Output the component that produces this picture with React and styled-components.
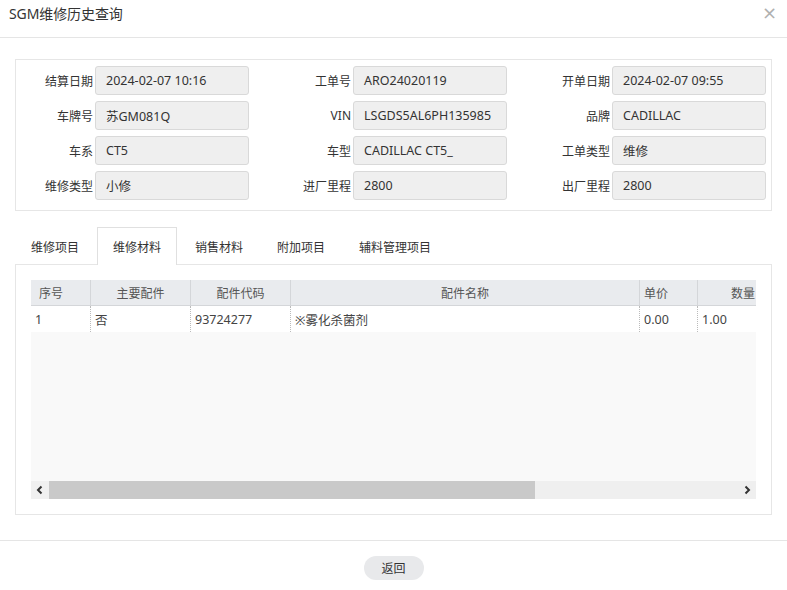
import React from 'react';
import styled, { createGlobalStyle } from 'styled-components';

const GlobalStyle = createGlobalStyle`
  html, body {
    margin: 0;
    padding: 0;
    background: #ffffff;
  }
  body {
    font-family: "Noto Sans", "Noto Sans CJK SC", sans-serif;
    color: #333;
  }
`;

const Dialog = styled.div`
  width: 787px;
  height: 590px;
  display: flex;
  flex-direction: column;
  background: #fff;
`;

const Header = styled.div`
  height: 38px;
  flex: none;
  box-sizing: border-box;
  border-bottom: 1px solid #e5e5e5;
  display: flex;
  align-items: center;
  justify-content: space-between;
  padding: 0 10px 11px 9px;
`;

const Title = styled.h1`
  margin: 0;
  font-size: 14px;
  font-weight: 400;
  color: #333;
  letter-spacing: -0.1px;
`;

const Close = styled.span`
  font-size: 18px;
  color: #b0b0b0;
  line-height: 1;
  font-family: "DejaVu Sans", sans-serif;
`;

const Body = styled.div`
  flex: none;
  height: 503px;
  padding: 21px 15px 0;
  box-sizing: border-box;
  border-bottom: 1px solid #e5e5e5;
`;

const InfoPanel = styled.div`
  border: 1px solid #e6e6e6;
  padding: 6px 5px 10px 0;
  display: grid;
  grid-template-columns: 77px 154px 100px 154px 101px 154px;
  column-gap: 2px;
  row-gap: 6px;
  align-items: center;
`;

const Label = styled.label`
  text-align: right;
  font-size: 12px;
  color: #333;
  white-space: nowrap;
`;

const Field = styled.div`
  height: 29px;
  box-sizing: border-box;
  border: 1px solid #d9d9d9;
  border-radius: 3px;
  background: #efefef;
  padding: 0 10px;
  display: flex;
  align-items: center;
  font-size: 12.5px;
  color: #333;
  white-space: nowrap;
  overflow: hidden;
`;

const TabBar = styled.div`
  margin-top: 15px;
  height: 38px;
  display: flex;
  align-items: stretch;
`;

const Tab = styled.div`
  padding: 0 15px;
  margin-right: 2px;
  display: flex;
  align-items: center;
  font-size: 12px;
  color: #333;
  box-sizing: border-box;
  border: 1px solid ${(p) => (p.active ? '#e0e0e0' : 'transparent')};
  border-bottom: none;
  background: ${(p) => (p.active ? '#fff' : 'transparent')};
  position: relative;
  top: 1px;
  z-index: 1;
`;

const TabPanel = styled.div`
  border: 1px solid #e6e6e6;
  height: 251px;
  box-sizing: border-box;
  padding: 15px 15px 0;
`;

const Grid = styled.div`
  width: 725px;
  height: 219px;
  display: flex;
  flex-direction: column;
  background: #f9f9f9;
  overflow: hidden;
`;

const Table = styled.div`
  flex: 1;
  overflow: hidden;
`;

const Row = styled.div`
  display: flex;
  height: ${(p) => (p.head ? 25 : 26)}px;
  width: 900px;
  background: ${(p) => (p.head ? '#e9ebee' : '#fff')};
  border-bottom: ${(p) => (p.head ? '1px solid #d4d6d9' : 'none')};
`;

const Cell = styled.div`
  width: ${(p) => p.w}px;
  flex-shrink: 0;
  box-sizing: border-box;
  padding: 0 ${(p) => (p.pad ?? 4)}px;
  display: flex;
  align-items: center;
  justify-content: ${(p) => p.align || 'flex-start'};
  font-size: ${(p) => (p.head ? 12 : 12.5)}px;
  color: ${(p) => (p.head ? '#555' : '#444')};
  border-right: 1px ${(p) => (p.head ? 'solid #d4d6d9' : 'dotted #bbb')};
  white-space: nowrap;
`;

const ScrollBar = styled.div`
  height: 18px;
  display: flex;
  background: #efefef;
`;

const ScrollBtn = styled.div`
  width: 18px;
  display: flex;
  align-items: center;
  justify-content: center;
  background: ${(p) => (p.left ? '#f0f0f0' : 'transparent')};
`;

const Thumb = styled.div`
  width: 486px;
  background: #c9c9c9;
`;

const Track = styled.div`
  flex: 1;
`;

const Footer = styled.div`
  flex: 1;
  display: flex;
  justify-content: center;
  padding-top: 15px;
`;

const Button = styled.button`
  width: 60px;
  height: 24px;
  border: none;
  border-radius: 12px;
  background: #e8e9eb;
  font-family: inherit;
  font-size: 12px;
  color: #333;
  cursor: pointer;
`;

const Arrow = ({ dir }) => (
  <svg width="8" height="10" viewBox="0 0 8 10">
    <path
      d={dir === 'left' ? 'M5.5 1.5 L2 5 L5.5 8.5' : 'M2.5 1.5 L6 5 L2.5 8.5'}
      fill="none"
      stroke="#333"
      strokeWidth="2"
    />
  </svg>
);

const info = [
  ['结算日期', '2024-02-07 10:16', '工单号', 'ARO24020119', '开单日期', '2024-02-07 09:55'],
  ['车牌号', '苏GM081Q', 'VIN', 'LSGDS5AL6PH135985', '品牌', 'CADILLAC'],
  ['车系', 'CT5', '车型', 'CADILLAC CT5_', '工单类型', '维修'],
  ['维修类型', '小修', '进厂里程', '2800', '出厂里程', '2800'],
];

const tabs = ['维修项目', '维修材料', '销售材料', '附加项目', '辅料管理项目'];

const columns = [
  { title: '序号', w: 60, align: 'flex-start', pad: 8 },
  { title: '主要配件', w: 100, align: 'center' },
  { title: '配件代码', w: 100, align: 'center' },
  { title: '配件名称', w: 349, align: 'center' },
  { title: '单价', w: 58, align: 'flex-start' },
  { title: '数量', w: 62, align: 'flex-end' },
  { title: '', w: 120 },
];

const rows = [['1', '否', '93724277', '※雾化杀菌剂', '0.00', '1.00', '']];

export default function App() {
  return (
    <>
      <GlobalStyle />
      <Dialog>
        <Header>
          <Title>SGM维修历史查询</Title>
          <Close>×</Close>
        </Header>
        <Body>
          <InfoPanel>
            {info.map((r) =>
              [0, 2, 4].map((i) => (
                <React.Fragment key={r[i]}>
                  <Label>{r[i]}</Label>
                  <Field>{r[i + 1]}</Field>
                </React.Fragment>
              ))
            )}
          </InfoPanel>
          <TabBar>
            {tabs.map((t) => (
              <Tab key={t} active={t === '维修材料'}>
                {t}
              </Tab>
            ))}
          </TabBar>
          <TabPanel>
            <Grid>
              <Table>
                <Row head>
                  {columns.map((c, i) => (
                    <Cell key={i} head w={c.w} align={c.align} pad={c.pad}>
                      {c.title}
                    </Cell>
                  ))}
                </Row>
                {rows.map((r, ri) => (
                  <Row key={ri}>
                    {r.map((v, i) => (
                      <Cell key={i} w={columns[i].w}>
                        {v}
                      </Cell>
                    ))}
                  </Row>
                ))}
              </Table>
              <ScrollBar>
                <ScrollBtn left>
                  <Arrow dir="left" />
                </ScrollBtn>
                <Thumb />
                <Track />
                <ScrollBtn>
                  <Arrow dir="right" />
                </ScrollBtn>
              </ScrollBar>
            </Grid>
          </TabPanel>
        </Body>
        <Footer>
          <Button>返回</Button>
        </Footer>
      </Dialog>
    </>
  );
}
